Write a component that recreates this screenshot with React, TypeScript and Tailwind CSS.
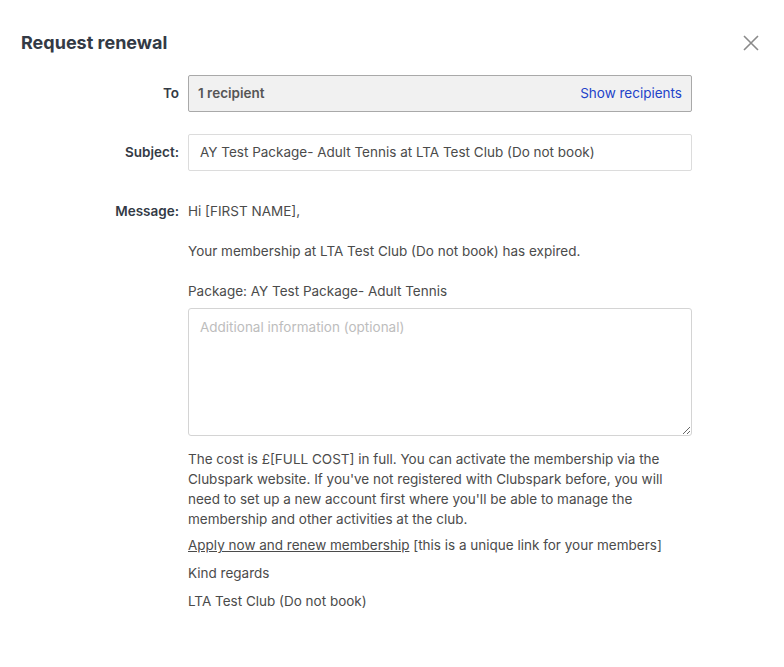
import React from "react";

const App: React.FC = () => {
  return (
    <div
      className="w-[784px] h-[667px] bg-white text-[13.5px] text-[#4b4b4b] relative"
      style={{ fontFamily: "Inter, 'Liberation Sans', sans-serif" }}
    >
      <div className="flex items-center justify-between pl-[21px] pr-[24px] pt-[31px]">
        <h1 className="text-[18px] font-bold text-[#333a45] leading-[24px]">Request renewal</h1>
        <button className="text-[#8a8a8a]" aria-label="Close">
          <svg width="18" height="18" viewBox="0 0 18 18" fill="none" stroke="currentColor" strokeWidth="1.6">
            <path d="M2 2 L16 16 M16 2 L2 16" />
          </svg>
        </button>
      </div>

      {/* form */}
      <div className="flex flex-col pl-[21px] mt-[20px]">
        <div className="flex items-center">
          <label className="w-[158px] text-right font-semibold text-[#333a45]">To</label>
          <div className="ml-[9px] w-[504px] h-[37px] flex items-center justify-between px-[9px] bg-[#f1f1f1] border border-[#a9a9a9] rounded-[2px]">
            <span className="font-semibold text-[#555]">1 recipient</span>
            <a className="text-[#2243c9] cursor-pointer">Show recipients</a>
          </div>
        </div>

        <div className="flex items-center mt-[22px]">
          <label className="w-[158px] text-right font-semibold text-[#333a45]">Subject:</label>
          <div className="ml-[9px] w-[504px] h-[37px] flex items-center px-[11px] bg-white border border-[#dcdcdc] rounded-[2px] text-[#4b4b4b]">
            AY Test Package- Adult Tennis at LTA Test Club (Do not book)
          </div>
        </div>

        <div className="flex mt-[30px]">
          <label className="w-[158px] text-right font-semibold text-[#333a45] leading-[20px]">Message:</label>
          <div className="ml-[9px] w-[504px] flex flex-col leading-[20px]">
            <p>Hi [FIRST NAME],</p>
            <p className="mt-[20px]">Your membership at LTA Test Club (Do not book) has expired.</p>
            <p className="mt-[20px]">Package: AY Test Package- Adult Tennis</p>
            <textarea
              className="mt-[7px] w-[504px] h-[128px] border border-[#d4d4d4] rounded-[3px] px-[11px] py-[8px] placeholder:text-[#bdbdbd] outline-none"
              placeholder="Additional information (optional)"
            />
            <p className="mt-[13px]">
              The cost is £[FULL COST] in full. You can activate the membership via the Clubspark website. If you've not registered with Clubspark before, you will need to set up a new account first where you'll be able to manage the membership and other activities at the club.
            </p>
            <p className="mt-[6px]">
              <a className="underline cursor-pointer">Apply now and renew membership</a> [this is a unique link for your members]
            </p>
            <p className="mt-[8px]">Kind regards</p>
            <p className="mt-[8px]">LTA Test Club (Do not book)</p>
          </div>
        </div>
      </div>
    </div>
  );
};

export default App;
